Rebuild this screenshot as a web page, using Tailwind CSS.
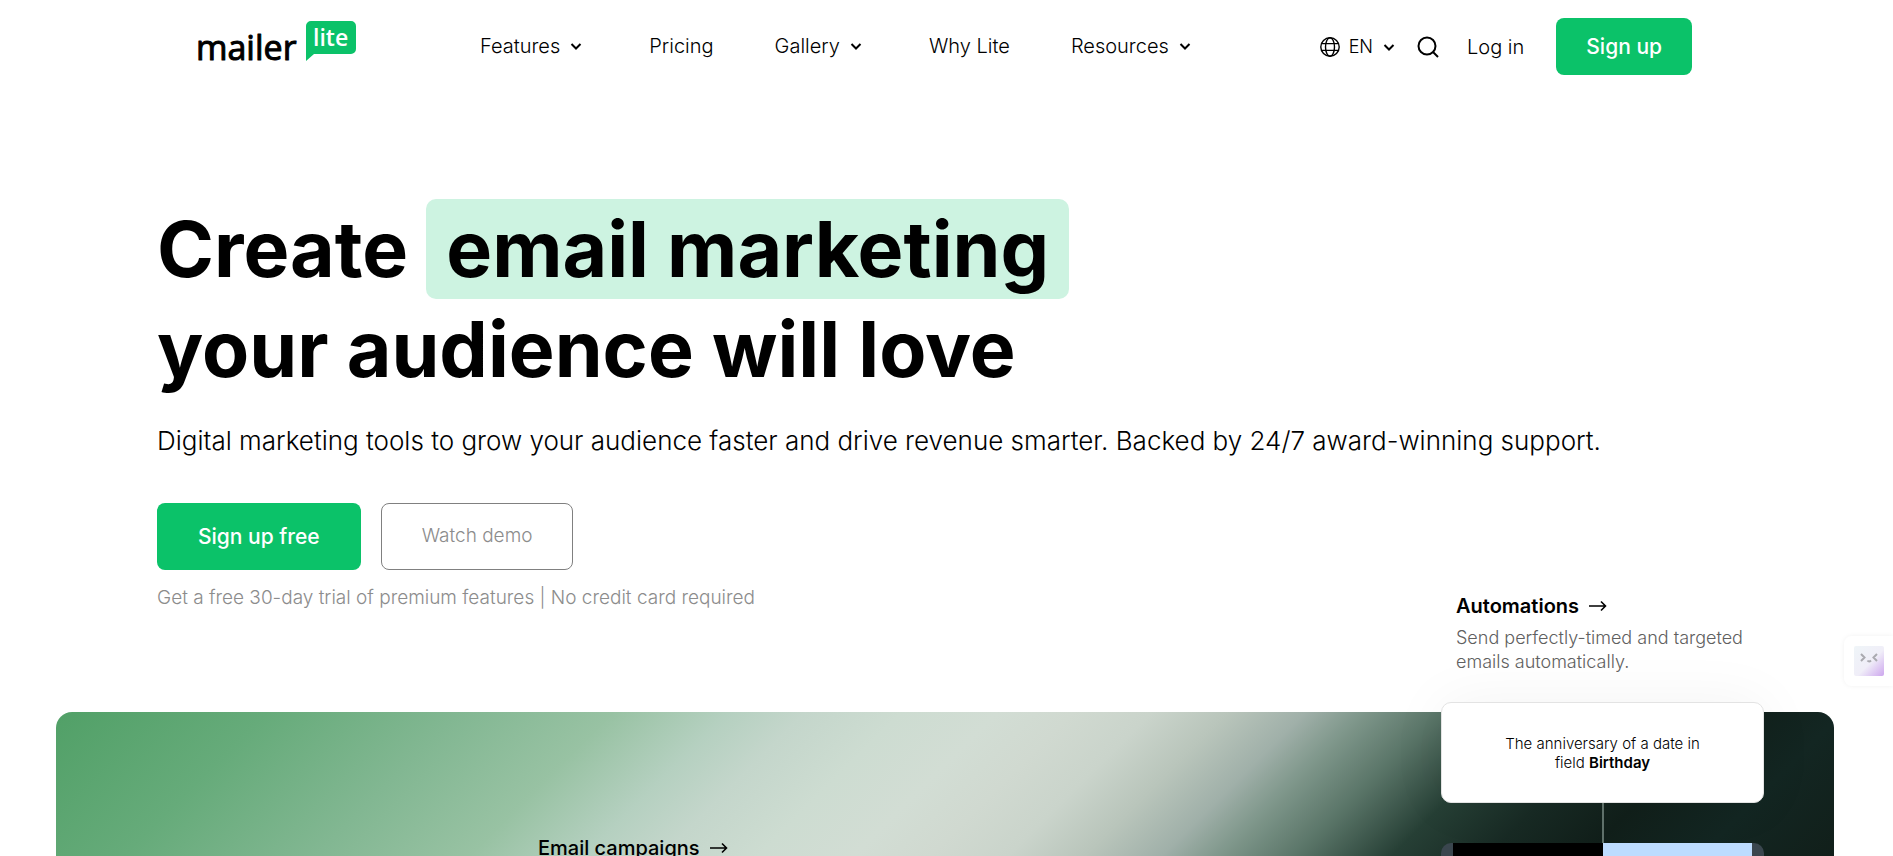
<!DOCTYPE html>
<html lang="en">
<head>
    <meta charset="UTF-8">
    <meta name="viewport" content="width=device-width, initial-scale=1.0">
    <title>MailerLite</title>
    <script src="https://cdn.jsdelivr.net/npm/@tailwindcss/browser@4"></script>
</head>
<body class="bg-white text-black font-['Inter',sans-serif]">
<div class="h-screen overflow-hidden flex flex-col pr-[3px]">

    <!-- Header -->
    <header class="w-full max-w-[1494px] mx-auto pt-[18px] flex items-center text-xl font-light">
        <a href="#" aria-label="MailerLite" class="shrink-0 self-start mr-[120px]">
            <svg class="w-[162px] h-[46px] overflow-visible" viewBox="0 0 162 46">
                <path fill="#0bc269" d="M113 3h40a5 5 0 0 1 5 5v23a5 5 0 0 1-5 5h-37l-8 7V8a5 5 0 0 1 5-5z"/>
                <text x="-2" y="42" font-family="Open Sans" font-size="34" font-weight="500" fill="#000" stroke="#000" stroke-width="1" stroke-linejoin="round">mailer</text>
                <text x="115" y="28" font-family="Open Sans" font-size="23" font-weight="600" fill="#fff">lite</text>
            </svg>
        </a>
        <nav class="flex items-center gap-[61px] pb-0.5">
            <button class="flex items-center gap-2 pr-1">Features
                <svg class="size-4" viewBox="0 0 16 16" fill="none" stroke="currentColor" stroke-width="2"><path d="M3.5 6 8 10.5 12.5 6"/></svg>
            </button>
            <a href="#">Pricing</a>
            <button class="flex items-center gap-2 pr-1">Gallery
                <svg class="size-4" viewBox="0 0 16 16" fill="none" stroke="currentColor" stroke-width="2"><path d="M3.5 6 8 10.5 12.5 6"/></svg>
            </button>
            <a href="#">Why Lite</a>
            <button class="flex items-center gap-2 pr-1">Resources
                <svg class="size-4" viewBox="0 0 16 16" fill="none" stroke="currentColor" stroke-width="2"><path d="M3.5 6 8 10.5 12.5 6"/></svg>
            </button>
        </nav>
        <div class="ml-auto flex items-center">
            <button class="flex items-center text-lg">
                <svg class="size-5 mr-[9px]" viewBox="0 0 20 20" fill="none" stroke="currentColor" stroke-width="1.4"><circle cx="10" cy="10" r="9.2"/><ellipse cx="10" cy="10" rx="4.5" ry="9.2"/><path d="M1.5 6.6h17M1.5 13.4h17"/></svg>
                EN
                <svg class="size-4 ml-2" viewBox="0 0 16 16" fill="none" stroke="currentColor" stroke-width="2"><path d="M3.5 6 8 10.5 12.5 6"/></svg>
            </button>
            <button aria-label="Search" class="ml-5">
                <svg class="size-[22px]" viewBox="0 0 22 22" fill="none" stroke="currentColor" stroke-width="2"><circle cx="10" cy="10" r="8.5"/><path d="m16 16 5 5"/></svg>
            </button>
            <a href="#" class="ml-7">Log in</a>
            <a href="#" class="ml-8 h-[57px] px-[30px] flex items-center rounded-lg bg-[#0bc269] text-white text-[21px] font-medium">Sign up</a>
        </div>
    </header>

    <!-- Hero -->
    <section class="w-full max-w-[1576px] mx-auto mt-[124px]">
        <h1 class="text-[77px] leading-[100px] font-bold">
            Create <span class="inline-block px-5 rounded-[10px] bg-[#cdf3e1]">email marketing</span><br>
            your audience will love
        </h1>
        <p class="mt-6 text-[26px] leading-9 font-light">Digital marketing tools to grow your audience faster and drive revenue smarter. Backed by 24/7 award-winning support.</p>
        <div class="mt-11 flex gap-5">
            <a href="#" class="h-[67px] px-[41px] flex items-center rounded-lg bg-[#0bc269] text-white text-[21px] font-medium">Sign up free</a>
            <button class="h-[67px] px-10 rounded-lg border border-[#808080] text-[#8c8c8c] text-[19px] font-light">Watch demo</button>
        </div>
        <p class="mt-3.5 text-[19px] leading-7 font-light text-[#8c8c8c]">Get a free 30-day trial of premium features | No credit card required</p>
    </section>

    <!-- Feature panel -->
    <section class="flex-1 min-h-0 mt-[100px] mx-14 pl-[482px] pr-[70px] flex justify-between items-start rounded-t-2xl bg-[linear-gradient(135deg,#51a067_0%,#66ab7a_11%,#82b792_21%,#98c2a3_29%,#b5d0c0_35%,#c4d6cb_39%,#cddcd1_44%,#d2ddd4_49%,#d0d9d0_53%,#cad4cb_57%,#b9c5bb_61%,#a0b0a9_65%,#7f978b_68%,#5a7568_72%,#263f35_77%,#182a24_82%,#111f1a_87%,#132622_93%,#111f1a_100%)]">
        <a href="#" class="pt-[122px] flex items-center gap-2.5 text-xl font-medium whitespace-nowrap">Email campaigns
            <svg class="w-[18px] h-3" viewBox="0 0 18 12" fill="none" stroke="currentColor" stroke-width="1.6"><path d="M0 6h16M12 1.5 16.5 6 12 10.5"/></svg>
        </a>
        <div class="w-[323px] -mt-[120px]">
            <div class="px-[15px]">
                <a href="#" class="flex items-center gap-2.5 text-xl font-semibold">Automations
                    <svg class="w-[18px] h-3" viewBox="0 0 18 12" fill="none" stroke="currentColor" stroke-width="1.6"><path d="M0 6h16M12 1.5 16.5 6 12 10.5"/></svg>
                </a>
                <p class="mt-1.5 text-lg leading-6 font-light text-[#606060]">Send perfectly-timed and targeted emails automatically.</p>
            </div>
            <div class="mt-7 h-[101px] px-14 flex items-center justify-center rounded-[10px] border border-[#e3e3e3] bg-white shadow-[0_0_60px_rgba(0,0,0,0.05)]">
                <p class="text-[15px] leading-[19px] font-light text-center">The anniversary of a date in field <b class="font-semibold">Birthday</b></p>
            </div>
            <div class="w-0.5 h-10 mx-auto bg-[#5f706a]"></div>
            <div class="h-24 px-3 flex rounded-[10px] bg-[#3a464e]">
                <div class="flex-1 bg-black"></div>
                <div class="flex-1 bg-[#bddcff]"></div>
            </div>
        </div>
    </section>

    <!-- Assistant tab on the window edge -->
    <button aria-label="Assistant" class="fixed right-0 top-[636px] pl-2.5 pr-[9px] py-2.5 rounded-l-lg bg-white shadow-[0_0_5px_rgba(0,0,0,0.06)]">
        <svg class="size-[30px]" viewBox="0 0 30 30" fill="none">
            <defs>
                <linearGradient id="face" x1="0" y1="0" x2="1" y2="1">
                    <stop offset="0" stop-color="#eff5f8"/>
                    <stop offset="0.55" stop-color="#f0eef8"/>
                    <stop offset="1" stop-color="#cda6ee"/>
                </linearGradient>
            </defs>
            <rect width="30" height="30" rx="2" fill="url(#face)"/>
            <path d="M7 8l3.5 3.5L7 15M23 8l-3.5 3.5L23 15M13.5 14.5q1.5 2 3.5 0" stroke="#aaaab0" stroke-width="2"/>
        </svg>
    </button>

</div>
</body>
</html>
